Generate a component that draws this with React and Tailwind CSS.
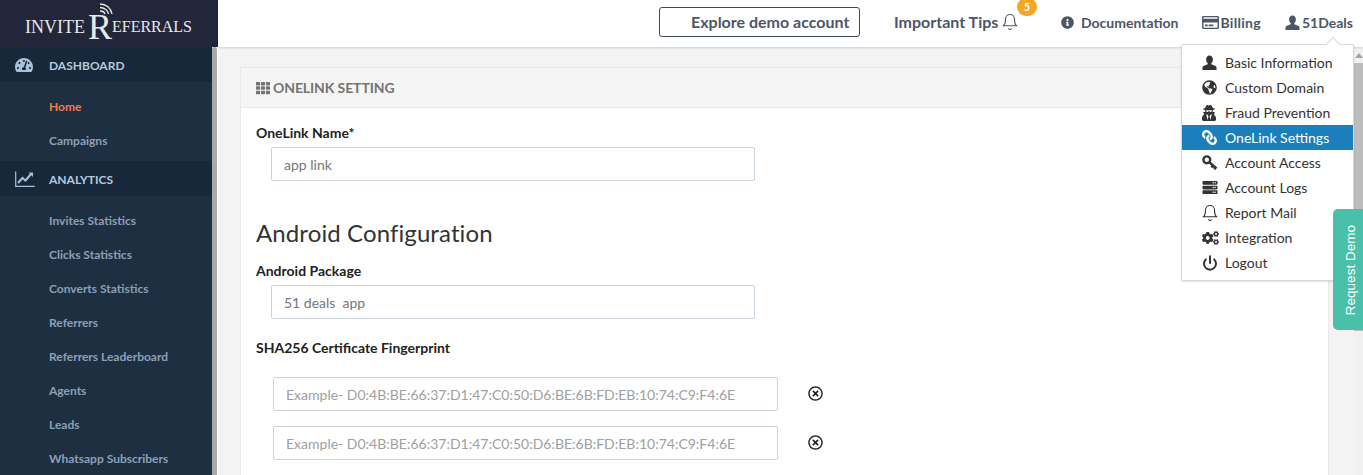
import React from "react";
import {
  FaTachometerAlt,
  FaGlobeAmericas,
  FaUserSecret,
  FaLink,
  FaServer,
  FaCogs,
  FaInfoCircle,
  FaRegCreditCard,
  FaTh,
  FaRegTimesCircle,
} from "react-icons/fa";
import { FiPower, FiBell } from "react-icons/fi";

const dashboardLinks = ["Home", "Campaigns"];
const analyticsLinks = [
  "Invites Statistics",
  "Clicks Statistics",
  "Converts Statistics",
  "Referrers",
  "Referrers Leaderboard",
  "Agents",
  "Leads",
  "Whatsapp Subscribers",
];

function UserIcon({ className }) {
  return (
    <svg className={className} viewBox="0 0 16 16" fill="currentColor">
      <path d="M8 0.5c-2.2 0-3.6 1.8-3.6 4.2 0 1.7 0.7 3.2 1.7 4l0 1.2-4 1.6c-1 0.4-1.6 1.2-1.6 2.3v2.2h15v-2.2c0-1.1-0.6-1.9-1.6-2.3l-4-1.6 0-1.2c1-0.8 1.7-2.3 1.7-4 0-2.4-1.4-4.2-3.6-4.2z" />
    </svg>
  );
}

function KeyIcon({ className }) {
  return (
    <svg className={className} viewBox="0 0 16 16" fill="none" stroke="currentColor">
      <circle cx="4.8" cy="4.8" r="3.4" strokeWidth="2.4" />
      <path d="M7 7l7.5 6.5M11 10.5l-1.5 2M13.5 12.5l-1.2 1.8" strokeWidth="2.4" />
    </svg>
  );
}

function ChartIcon({ className }) {
  return (
    <svg className={className} viewBox="0 0 20 16" fill="none" stroke="currentColor">
      <path d="M0.7 0.5v14.8h19" strokeWidth="1.2" />
      <path d="M3 12l4.5-5 3 2.5 5.5-6.5" strokeWidth="2" />
      <path d="M13.5 1.5h4.5v4.5z" fill="currentColor" stroke="none" />
    </svg>
  );
}

const menuItems = [
  { label: "Basic Information", icon: <UserIcon className="w-[15px] h-[15px]" /> },
  { label: "Custom Domain", icon: <FaGlobeAmericas className="w-[15px] h-[15px]" /> },
  { label: "Fraud Prevention", icon: <FaUserSecret className="w-[14px] h-[16px]" /> },
  { label: "OneLink Settings", icon: <FaLink className="w-[15px] h-[15px] -scale-x-100" />, active: true },
  { label: "Account Access", icon: <KeyIcon className="w-[16px] h-[16px]" /> },
  { label: "Account Logs", icon: <FaServer className="w-[16px] h-[15px]" /> },
  { label: "Report Mail", icon: <FiBell className="w-[18px] h-[18px] -ml-[1px] stroke-[1.5]" /> },
  { label: "Integration", icon: <FaCogs className="w-[17px] h-[16px]" /> },
  { label: "Logout", icon: <FiPower className="w-[16px] h-[16px] stroke-[3]" /> },
];

function Logo() {
  return (
    <div className="h-[47px] bg-[#22263a] flex items-end pl-[25px] pb-[11px] relative text-[#e8e8e8] font-['Liberation_Serif',serif] leading-none">
      <span className="text-[18px] leading-[18px]">INVITE</span>
      <span className="text-[36px] ml-[3px] leading-[18px]">R</span>
      <span className="text-[16px] leading-[18px]">EFERRALS</span>
      <svg className="absolute left-[99px] top-[3px] w-[14px] h-[12px]" viewBox="0 0 14 12" fill="none" stroke="#e8e8e8" strokeWidth="1.3">
        <path d="M1 1 C7 1 12 5 13 11" />
        <path d="M1 4.5 C5 4.5 9 7 9.5 11" />
        <path d="M1 8 C3.5 8 5.5 9 6 11" />
      </svg>
    </div>
  );
}

function NavHead({ icon, label }) {
  return (
    <div className="h-[35px] bg-[#17283a] flex items-center text-[#b4c9de] text-[12px] font-bold">
      <span className="w-[49px] pl-[15px] flex">{icon}</span>
      <span className="pt-[2px]">{label}</span>
    </div>
  );
}

function NavLink({ label }) {
  return (
    <div className={`h-[34px] pl-[49px] flex items-center text-[12px] font-bold ${label === "Home" ? "text-[#f4794f]" : "text-[#8ba0b6]"}`}>
      {label}
    </div>
  );
}

function Sidebar() {
  return (
    <aside className="w-[218px] shrink-0 flex flex-col bg-white">
      <Logo />
      <div className="flex flex-1 min-h-0">
        <nav className="w-[212px] bg-[#1e2f42] overflow-hidden">
          <NavHead icon={<FaTachometerAlt className="w-[18px] h-[16px] text-[#a9c0d6]" />} label="DASHBOARD" />
          <div className="pt-[8px] pb-[3px]">
            {dashboardLinks.map((l) => (
              <NavLink key={l} label={l} />
            ))}
          </div>
          <NavHead icon={<ChartIcon className="w-[20px] h-[16px] text-[#a9c0d6]" />} label="ANALYTICS" />
          <div className="pt-[8px]">
            {analyticsLinks.map((l) => (
              <NavLink key={l} label={l} />
            ))}
          </div>
        </nav>
        <div className="w-[5px] bg-[#a9a9a9] rounded-t-[2px]" />
      </div>
    </aside>
  );
}

function Header() {
  return (
    <header className="h-[47px] shrink-0 bg-white flex items-center shadow-[0_1px_2px_rgba(0,0,0,0.15)] relative z-10 pb-[3px] text-[#4d5666]">
      <div className="ml-[441px] w-[201px] h-[30px] border border-[#3f4a5c] rounded-[3px] flex items-center pl-[31px] text-[16px] font-bold">
        Explore demo account
      </div>
      <div className="w-[167px] pl-[34px] flex items-center text-[16px] font-bold relative">
        Important Tips
        <FiBell className="ml-[3px] w-[18px] h-[18px] stroke-[1.5]" />
        <span className="absolute left-[157px] top-[-12px] w-[20px] h-[18px] rounded-full bg-[#f5a623] text-white text-[11px] font-bold flex items-center justify-center">
          5
        </span>
      </div>
      <div className="ml-[34px] flex items-center gap-[7px] text-[14px] font-bold">
        <FaInfoCircle className="w-[13px] h-[13px]" />
        Documentation
      </div>
      <div className="ml-[24px] flex items-center gap-[1px] text-[14px] font-bold tracking-[0.3px]">
        <FaRegCreditCard className="w-[17px] h-[15px]" />
        Billing
      </div>
      <div className="ml-[24px] flex items-center gap-[2px] text-[14px] font-bold">
        <UserIcon className="w-[15px] h-[15px]" />
        51Deals
      </div>
    </header>
  );
}

function TextInput({ value }) {
  return (
    <div className="ml-[15px] w-[484px] h-[34px] border border-[#c8d3de] rounded-[2px] flex items-center pl-[12px] text-[14px] text-[#777] whitespace-pre">
      {value}
    </div>
  );
}

function FingerprintRow() {
  return (
    <div className="flex items-center">
      <div className="ml-[17px] w-[505px] h-[34px] border border-[#c8d3de] rounded-[2px] flex items-center pl-[12px] text-[14px] text-[#a0a0a0]">
        Example- D0:4B:BE:66:37:D1:47:C0:50:D6:BE:6B:FD:EB:10:74:C9:F4:6E
      </div>
      <FaRegTimesCircle className="ml-[30px] w-[15px] h-[15px] text-[#222] -mt-[1px]" />
    </div>
  );
}

function Scrollbar() {
  return (
    <div className="w-[9px] shrink-0 bg-[#f1f1f1] flex flex-col">
      <div className="h-[16px] flex items-center justify-center">
        <div className="border-x-[4px] border-x-transparent border-b-[5px] border-b-[#a3a3a3]" />
      </div>
      <div className="h-[268px] bg-[#bcbcbc]" />
    </div>
  );
}

function Content() {
  return (
    <div className="flex-1 min-h-0 flex bg-[#f3f3f3] overflow-hidden">
      <div className="flex-1 min-w-0 pl-[22px] pr-[25px] pt-[20px]">
        <section className="bg-white border border-[#e9e9e9] h-[500px]">
          <div className="h-[40px] bg-[#f5f5f5] border-b border-[#e8e8e8] flex items-center pl-[15px] gap-[3px] text-[14px] tracking-[-0.1px] font-bold text-[#747474]">
            <FaTh className="w-[14px] h-[14px]" />
            ONELINK SETTING
          </div>
          <div className="pl-[15px]">
            <div className="pt-[16px] pb-[6px] text-[14px] leading-[17px] font-bold text-[#222]">OneLink Name*</div>
            <TextInput value="app link" />
            <h2 className="text-[24px] tracking-[0.1px] leading-[30px] font-normal text-[#333] mt-[37px]">Android Configuration</h2>
            <div className="pt-[14px] pb-[6px] text-[14px] leading-[17px] font-bold text-[#222]">Android Package</div>
            <TextInput value="51 deals  app" />
            <div className="pt-[20px] text-[14px] leading-[17px] font-bold text-[#222]">SHA256 Certificate Fingerprint</div>
            <div className="mt-[21px] flex flex-col gap-[15px]">
              <FingerprintRow />
              <FingerprintRow />
            </div>
          </div>
        </section>
      </div>
      <Scrollbar />
    </div>
  );
}

function UserMenu() {
  return (
    <div className="absolute left-[1181px] top-[44px] w-[173px] h-[237px] bg-white border border-[#d8d8d8] rounded-[2px] shadow-[0_1px_2px_rgba(0,0,0,0.12)] z-20 pt-[5px] text-[14px] text-[#333]">
      <div className="absolute left-[146px] -top-[6px] w-[10px] h-[10px] bg-white border-l border-t border-[#d8d8d8] rotate-45" />
      {menuItems.map((item) => (
        <div key={item.label} className={`h-[25px] flex items-center ${item.active ? "bg-[#1b7fbd] text-white" : ""}`}>
          <span className="w-[43px] pl-[20px] flex">{item.icon}</span>
          {item.label}
        </div>
      ))}
    </div>
  );
}

function RequestDemo() {
  return (
    <div className="absolute left-[1333px] top-[209px] w-[30px] h-[121px] bg-[#4abfa9] rounded-l-[5px] z-30 flex items-center justify-center pl-[6px] pt-[2px]">
      <span className="-rotate-90 whitespace-nowrap text-white text-[13.5px] font-['Liberation_Sans',sans-serif]">Request Demo</span>
    </div>
  );
}

export default function App() {
  return (
    <div className="relative w-[1363px] h-[475px] overflow-hidden flex bg-white font-['Lato',sans-serif]">
      <Sidebar />
      <main className="flex-1 min-w-0 flex flex-col">
        <Header />
        <Content />
      </main>
      <UserMenu />
      <RequestDemo />
    </div>
  );
}
